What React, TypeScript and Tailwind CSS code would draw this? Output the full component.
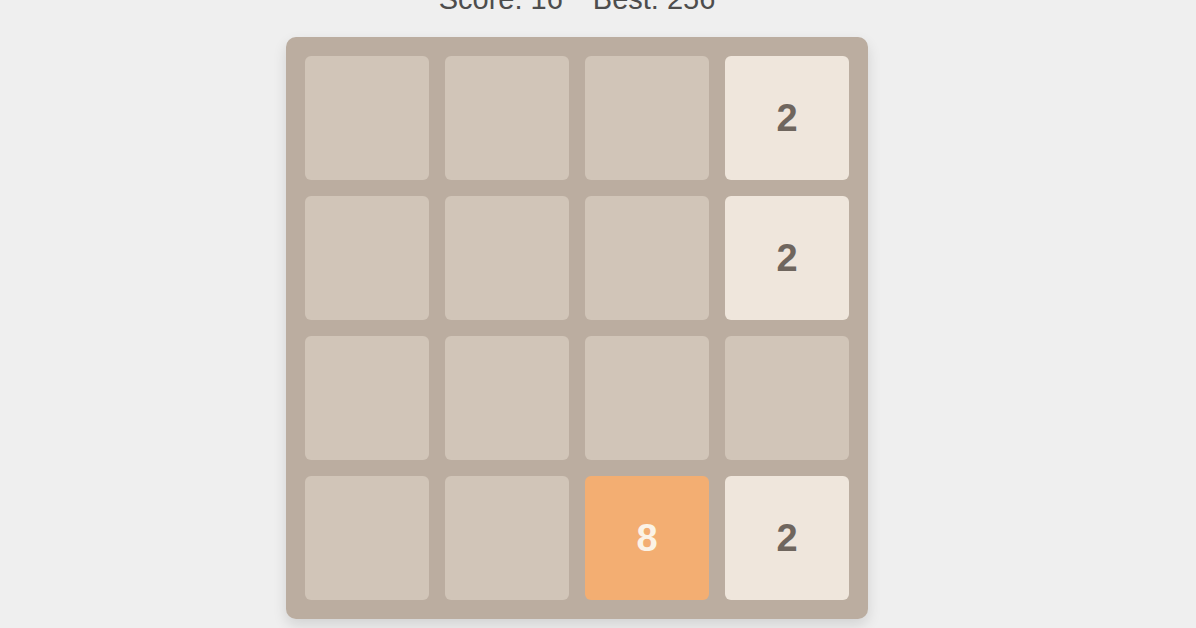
import { useState } from 'react'

type Grid = number[][]

const START_GRID: Grid = [
  [0, 0, 0, 2],
  [0, 0, 0, 2],
  [0, 0, 0, 0],
  [0, 0, 8, 2],
]

function tileClass(value: number) {
  switch (value) {
    case 0:
      return 'bg-[#d1c5b8]'
    case 2:
      return 'bg-[#efe6dc] text-[#6f665e]'
    case 4:
      return 'bg-[#ede0c8] text-[#6f665e]'
    case 8:
      return 'bg-[#f3ae72] text-[#fbf3e6]'
    default:
      return 'bg-[#f59563] text-[#f9f6f2]'
  }
}

function Tile({ value }: { value: number }) {
  return (
    <div
      className={`flex h-[124px] w-[124px] items-center justify-center rounded-[6px] text-[38px] font-bold ${tileClass(value)}`}
    >
      {value > 0 ? value : ''}
    </div>
  )
}

export default function App() {
  const [grid] = useState<Grid>(START_GRID)
  const [score] = useState(16)
  const [best] = useState(256)

  return (
    <div className="flex h-[628px] w-full flex-col items-center overflow-hidden bg-[#efefef] pr-[42px] font-['Liberation_Sans',Arial,sans-serif]">
      <div className="-mt-[18px] flex gap-[30px] text-[29px] leading-[34px] text-[#4d4d4d]">
        <span>Score: {score}</span>
        <span>Best: {best}</span>
      </div>

      <div className="mt-[21px] grid grid-cols-4 gap-[16px] rounded-[10px] bg-[#bbada0] p-[19px] shadow-[0_6px_14px_rgba(0,0,0,0.12)]">
        {grid.flatMap((row, r) =>
          row.map((value, c) => <Tile key={`${r}-${c}`} value={value} />)
        )}
      </div>
    </div>
  )
}
